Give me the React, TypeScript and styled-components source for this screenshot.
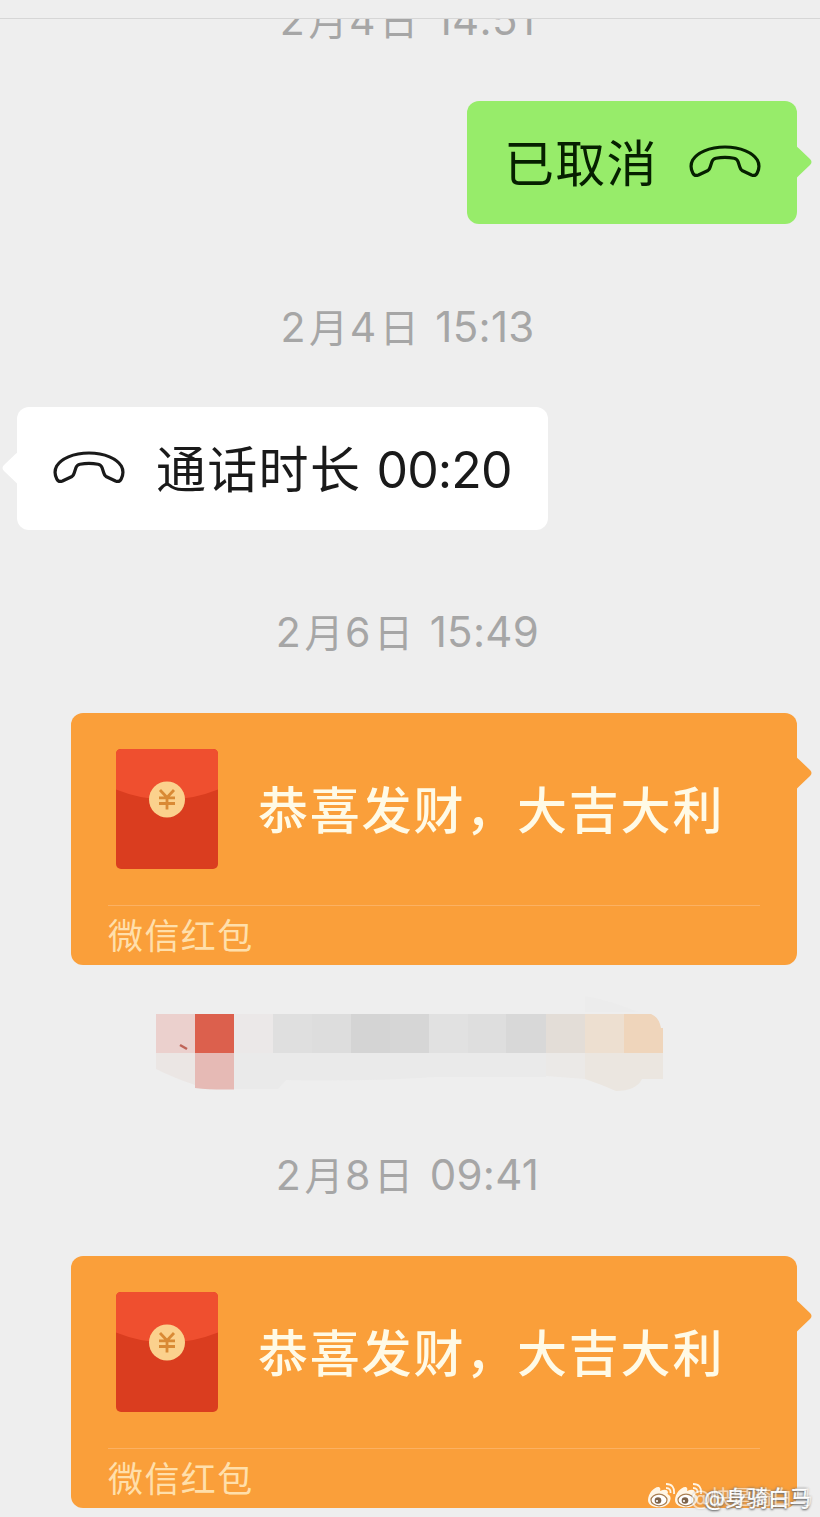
import React from 'react';
import styled, { createGlobalStyle } from 'styled-components';

const Global = createGlobalStyle`
  * { box-sizing: border-box; }
  body { margin: 0; background: #eeeeee; }
`;

const Screen = styled.main`
  width: 820px;
  height: 1517px;
  overflow: hidden;
  background: #eeeeee;
  position: relative;
  display: flex;
  flex-direction: column;
  font-family: Inter, 'Noto Sans CJK SC', sans-serif;
`;

const Header = styled.header`
  flex: none;
  height: 19px;
  border-bottom: 1px solid #d6d6d6;
`;

const Chat = styled.section`
  flex: 1;
  overflow: hidden;
  display: flex;
  flex-direction: column;
`;

const TimeRow = styled.time<{ $gap: number }>`
  flex: none;
  height: 44px;
  margin-top: ${(p) => p.$gap}px;
  padding: 0 5px 2px 0;
  display: flex;
  justify-content: center;
  align-items: center;
  font-size: 41px;
  line-height: 50px;
  letter-spacing: 0.6px;
  color: #a6a6a6;
`;

const Unit = styled.span`
  font-size: 39px;
  margin-left: 3px;
  margin-right: 1px;
`;

const Clock = styled.span`
  font-size: 42px;
  letter-spacing: 0.3px;
  margin-left: 15px;
`;

const Row = styled.div<{ $mine?: boolean; $gap: number }>`
  flex: none;
  display: flex;
  justify-content: ${(p) => (p.$mine ? 'flex-end' : 'flex-start')};
  margin-top: ${(p) => p.$gap}px;
  padding: 0 23px 0 17px;
`;

const Bubble = styled.div<{ $mine?: boolean }>`
  position: relative;
  display: flex;
  align-items: center;
  gap: 31px;
  width: ${(p) => (p.$mine ? 330 : 531)}px;
  height: 123px;
  padding: ${(p) => (p.$mine ? '0 0 0 37px' : '0 0 0 36px')};
  border-radius: 12px;
  background: ${(p) => (p.$mine ? '#97ec6a' : '#ffffff')};
  color: ${(p) => (p.$mine ? '#062000' : '#1a1a1a')};
`;

const BubbleText = styled.span`
  padding-top: 3px;
  font-size: 50px;
  line-height: 60px;
  letter-spacing: 1.3px;
  white-space: pre;
`;

const Duration = styled.span`
  letter-spacing: -0.9px;
`;

const Tail = styled.svg<{ $left?: boolean; $top: number }>`
  position: absolute;
  top: ${(p) => p.$top}px;
  ${(p) => (p.$left ? 'left: -15px; transform: scaleX(-1);' : 'right: -15px;')}
  width: 16px;
  height: 34px;
`;

const PhoneSvg = styled.svg`
  width: 72px;
  height: 34px;
  flex: none;
  margin-bottom: 4px;
`;

const Packet = styled.article`
  position: relative;
  width: 726px;
  height: 252px;
  border-radius: 12px;
  background: #fa9f3a;
  padding: 36px 37px 0;
`;

const PacketBody = styled.div`
  display: flex;
  align-items: center;
  height: 120px;
  padding-left: 8px;
  gap: 40px;
`;

const PacketTitle = styled.span`
  padding-top: 4px;
  font-size: 50px;
  line-height: 60px;
  letter-spacing: 1.8px;
  color: #fffae6;
  font-weight: 500;
  white-space: nowrap;
`;

const PacketFoot = styled.footer`
  margin-top: 36px;
  border-top: 1px solid #fbb163;
  height: 59px;
  line-height: 60px;
  font-size: 35px;
  font-weight: 400;
  letter-spacing: 1.4px;
  color: #ffdfab;
`;

const Mosaic = styled.svg`
  flex: none;
  margin: 29px 0 0 136px;
  width: 560px;
  height: 100px;
`;

const Watermark = styled.div`
  position: absolute;
  left: 648px;
  top: 1480px;
  display: flex;
  align-items: center;
  height: 32px;
  white-space: nowrap;
  color: #ffffff;
  font-size: 21.5px;
  font-weight: 500;
  text-shadow: 0 0 3px #666, 0 1px 2px #777;
`;

const WatermarkName = styled.span`
  margin-left: 2px;
  padding-top: 1px;
`;

const WatermarkEcho = styled.span`
  position: absolute;
  right: -2px;
  top: 1px;
  font-size: 20.5px;
  font-weight: 400;
  opacity: 0.6;
  text-shadow: 0 0 2px #999;
`;

const Phone = () => (
  <PhoneSvg viewBox="0 0 72 34" fill="none" stroke="currentColor" strokeWidth="3.2" strokeLinejoin="round">
    <path d="M36 3C20 3 8 9 3.700 16C1.500 20 1.800 25 3.800 29Q5.500 32.500 9.500 31L19 26.500Q20.500 25.500 21.200 23L23 17.500Q24 14.800 27 14.200Q36 12.500 45 14.200Q48 14.800 49 17.500L50.800 23Q51.500 25.500 53 26.500L62.500 31Q66.500 32.500 68.200 29C70.200 25 70.500 20 68.300 16C64 9 52 3 36 3Z" />
  </PhoneSvg>
);

const BubbleTail = ({ color, top, left }: { color: string; top: number; left?: boolean }) => (
  <Tail viewBox="0 0 16 34" $top={top} $left={left}>
    <path d="M0 0Q1 2 3 3.500L14 14Q17 17 14 20L3 30.500Q1 32 0 34Z" fill={color} />
  </Tail>
);

const Envelope = () => (
  <svg width="102" height="120" viewBox="0 0 102 120">
    <rect width="102" height="120" rx="5" fill="#da3d1f" />
    <path d="M0 5Q0 0 5 0H97Q102 0 102 5V40.500Q51 61 0 40.500Z" fill="#ef4f2f" />
    <circle cx="51" cy="50.500" r="18" fill="#fbd18d" />
    <path d="M44 41L51 48.500L58 41M51 48.500V60.500M43 48.800H59M43 54.500H59" fill="none" stroke="#d98a35" strokeWidth="2.800" />
  </svg>
);

const RedPacket = ({ gap }: { gap: number }) => (
  <Row $mine $gap={gap}>
    <Packet>
      <PacketBody>
        <Envelope />
        <PacketTitle>恭喜发财，大吉大利</PacketTitle>
      </PacketBody>
      <PacketFoot>微信红包</PacketFoot>
      <BubbleTail color="#fa9f3a" top={43} />
    </Packet>
  </Row>
);

const Time = ({ gap, month, day, clock }: { gap: number; month: number; day: number; clock: string }) => (
  <TimeRow $gap={gap}>
    <span>
      {month}
      <Unit>月</Unit>
      {day}
      <Unit>日</Unit>
      <Clock>{clock}</Clock>
    </span>
  </TimeRow>
);

const tiles: [number, number, string][] = [
  [20, 39, '#ebd0cd'], [59, 39, '#dc604d'], [98, 39, '#ebe8e8'], [137, 39, '#dfdfdf'],
  [176, 39, '#dddddd'], [215, 39, '#d4d4d4'], [254, 39, '#d6d6d6'], [293, 39, '#e1e1e1'],
  [332, 39, '#dedede'], [370, 40, '#d8d8d8'], [410, 39, '#e3ddd7'], [449, 39, '#eddfd0'],
];

const Pixelated = () => (
  <Mosaic viewBox="0 0 560 100">
    {tiles.map(([x, w, c]) => (
      <rect key={x} x={x} y="20" width={w} height="39" fill={c} />
    ))}
    <path d="M488 20H515Q523 23 525 34H527V59H488Z" fill="#efd5bb" />
    <path d="M20 59H59V91Q38 84 20 75Z" fill="#ebe6e4" />
    <path d="M59 59H98V95.500Q75 96 59 94Z" fill="#e6bab5" />
    <path d="M98 59H410V83H300Q220 88 150 86L142 95H98Z" fill="#eaeaea" />
    <path d="M410 59H449V85L410 82Z" fill="#ebe9e7" />
    <path d="M449 59H527V85H506Q500 97 480 97Q464 90 449 85Z" fill="#ebe6e0" />
    <path d="M449 2Q480 8 502 18H449Z" fill="#ececec" />
    <path d="M44 51L51 55" stroke="#bf6458" strokeWidth="2.500" />
  </Mosaic>
);

const WeiboEye = () => (
  <svg width="27" height="30" viewBox="0 0 27 30">
    <path d="M0 19C0 12 7 5 11 6Q13 7 12 10Q19 7 20 11L19.500 13Q24 15 22 20C19 29 0 28 0 19Z" fill="#fff6e6" />
    <ellipse cx="11" cy="19" rx="8" ry="5.800" fill="#fff" stroke="#a97f52" strokeWidth="1.200" />
    <circle cx="10" cy="19.500" r="3.300" fill="#7d634a" />
    <circle cx="9" cy="20" r="1.100" fill="#fff" />
    <path d="M18 7Q23 7 22.500 12M18 3Q27 3 26 13" fill="none" stroke="#fff6e6" strokeWidth="1.800" />
  </svg>
);

export default function App() {
  return (
    <Screen>
      <Global />
      <Header />
      <Chat>
        <Time gap={-20} month={2} day={4} clock="14:51" />
        <Row $mine $gap={58}>
          <Bubble $mine>
            <BubbleText>已取消</BubbleText>
            <Phone />
            <BubbleTail color="#97ec6a" top={44} />
          </Bubble>
        </Row>
        <Time gap={82} month={2} day={4} clock="15:13" />
        <Row $gap={57}>
          <Bubble>
            <Phone />
            <BubbleText>
              通话时长 <Duration>00:20</Duration>
            </BubbleText>
            <BubbleTail color="#ffffff" top={44} left />
          </Bubble>
        </Row>
        <Time gap={81} month={2} day={6} clock="15:49" />
        <RedPacket gap={58} />
        <Pixelated />
        <Time gap={60} month={2} day={8} clock="09:41" />
        <RedPacket gap={58} />
      </Chat>
      <Watermark>
        <WatermarkEcho>@快是骑白马</WatermarkEcho>
        <WeiboEye />
        <WeiboEye />
        <WatermarkName>@身骑白马</WatermarkName>
      </Watermark>
    </Screen>
  );
}
